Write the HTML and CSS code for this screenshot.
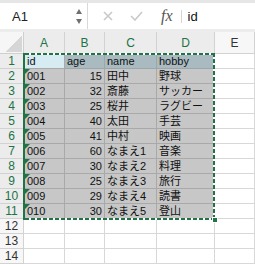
FILE: index.html
```html
<!DOCTYPE html>
<html lang="ja">
<head>
    <meta charset="UTF-8">
    <meta name="viewport" content="width=device-width, initial-scale=1.0">
    <title>Sheet1</title>
    <link rel="stylesheet" href="styles.css">
</head>
<body>
    <!-- 数式バー -->
    <div class="formula-bar">
        <div class="name-box">
            <span class="cell-ref">A1</span>
            <span class="spinner"><i class="up"></i><i class="down"></i></span>
        </div>
        <svg class="icon-cancel" width="10" height="10" viewBox="0 0 10 10">
            <path d="M1 1 L9 9 M9 1 L1 9" stroke="#c9c9c9" stroke-width="1.6" fill="none"/>
        </svg>
        <svg class="icon-enter" width="13" height="10" viewBox="0 0 13 10">
            <path d="M1 5 L5 9 L12 1" stroke="#c9c9c9" stroke-width="1.6" fill="none"/>
        </svg>
        <span class="fx">fx</span>
        <span class="fx-sep"></span>
        <span class="formula">id</span>
    </div>

    <!-- シート -->
    <div class="sheet">
        <div class="c corner"><span class="corner-mark"></span></div>
        <div class="c hd on">A</div>
        <div class="c hd on">B</div>
        <div class="c hd on">C</div>
        <div class="c hd on">D</div>
        <div class="c hd">E</div>

        <div class="c rn on">1</div>
        <div class="c active">id</div>
        <div class="c title">age</div>
        <div class="c title">name</div>
        <div class="c title">hobby</div>
        <div class="c"></div>

        <div class="c rn on">2</div>
        <div class="c sel err">001</div>
        <div class="c sel num">15</div>
        <div class="c sel">田中</div>
        <div class="c sel">野球</div>
        <div class="c"></div>

        <div class="c rn on">3</div>
        <div class="c sel err">002</div>
        <div class="c sel num">32</div>
        <div class="c sel">斎藤</div>
        <div class="c sel">サッカー</div>
        <div class="c"></div>

        <div class="c rn on">4</div>
        <div class="c sel err">003</div>
        <div class="c sel num">25</div>
        <div class="c sel">桜井</div>
        <div class="c sel">ラグビー</div>
        <div class="c"></div>

        <div class="c rn on">5</div>
        <div class="c sel err">004</div>
        <div class="c sel num">40</div>
        <div class="c sel">太田</div>
        <div class="c sel">手芸</div>
        <div class="c"></div>

        <div class="c rn on">6</div>
        <div class="c sel err">005</div>
        <div class="c sel num">41</div>
        <div class="c sel">中村</div>
        <div class="c sel">映画</div>
        <div class="c"></div>

        <div class="c rn on">7</div>
        <div class="c sel err">006</div>
        <div class="c sel num">60</div>
        <div class="c sel">なまえ1</div>
        <div class="c sel">音楽</div>
        <div class="c"></div>

        <div class="c rn on">8</div>
        <div class="c sel err">007</div>
        <div class="c sel num">30</div>
        <div class="c sel">なまえ2</div>
        <div class="c sel">料理</div>
        <div class="c"></div>

        <div class="c rn on">9</div>
        <div class="c sel err">008</div>
        <div class="c sel num">25</div>
        <div class="c sel">なまえ3</div>
        <div class="c sel">旅行</div>
        <div class="c"></div>

        <div class="c rn on">10</div>
        <div class="c sel err">009</div>
        <div class="c sel num">29</div>
        <div class="c sel">なまえ4</div>
        <div class="c sel">読書</div>
        <div class="c"></div>

        <div class="c rn on">11</div>
        <div class="c sel err">010</div>
        <div class="c sel num">30</div>
        <div class="c sel">なまえ5</div>
        <div class="c sel">登山</div>
        <div class="c"></div>

        <div class="c rn">12</div>
        <div class="c"></div><div class="c"></div><div class="c"></div><div class="c"></div><div class="c"></div>

        <div class="c rn">13</div>
        <div class="c"></div><div class="c"></div><div class="c"></div><div class="c"></div><div class="c"></div>

        <div class="c rn">14</div>
        <div class="c"></div><div class="c"></div><div class="c"></div><div class="c"></div><div class="c"></div>

        <!-- コピー範囲の点線 -->
        <div class="marquee"><span class="handle"></span></div>
    </div>
</body>
</html>
```

FILE: styles.css
```css
/* 全体 */
* {
    margin: 0;
    padding: 0;
    box-sizing: border-box;
}

body {
    width: 255px;
    height: 264px;
    overflow: hidden;
    background: #fff;
    color: #111;
    font-family: 'Liberation Sans', 'Noto Sans CJK JP', sans-serif;
}

/* 数式バー */
.formula-bar {
    display: flex;
    align-items: center;
    height: 32px;
    border-top: 3px solid #e6e6e6;
    border-bottom: 3px solid #ececec;
    background: #fff;
}

.name-box {
    display: flex;
    align-items: center;
    justify-content: space-between;
    width: 88px;
    height: 100%;
    padding: 0 5px 0 12px;
    border-right: 1px solid #d9d9d9;
}

.cell-ref {
    font-size: 13px;
    color: #222;
}

.spinner {
    display: flex;
    flex-direction: column;
    gap: 5px;
}

.spinner i {
    display: block;
    width: 0;
    height: 0;
    border-left: 3.5px solid transparent;
    border-right: 3.5px solid transparent;
}

.spinner .up {
    border-bottom: 5px solid #707070;
}

.spinner .down {
    border-top: 5px solid #707070;
}

.icon-cancel {
    margin-left: 15px;
}

.icon-enter {
    margin-left: 17px;
}

.fx {
    margin-left: 18px;
    font-family: 'Liberation Serif', serif;
    font-style: italic;
    font-size: 16px;
    color: #555;
}

.fx-sep {
    width: 1px;
    height: 13px;
    margin-left: 8px;
    background: #d4d4d4;
}

.formula {
    margin-left: 6px;
    font-size: 13px;
    color: #111;
}

/* シート */
.sheet {
    position: relative;
    display: grid;
    grid-template-columns: 24px 41px 40px 52px 58px 1fr;
    grid-template-rows: 22px repeat(14, 15px);
}

.c {
    position: relative;
    border-right: 1px solid #d8d8d8;
    border-bottom: 1px solid #d8d8d8;
    padding: 0 2px;
    font-size: 11px;
    line-height: 14px;
    white-space: nowrap;
    overflow: hidden;
}

/* 見出し */
.corner {
    background: #f6f6f6;
    border-color: #cfcfcf;
}

.corner-mark {
    position: absolute;
    right: 1px;
    bottom: 1px;
    width: 17px;
    height: 17px;
    background: linear-gradient(to bottom right, transparent 50%, #d6d6d6 50%);
}

.hd {
    background: #f7f7f7;
    border-color: #d2d2d2;
    text-align: center;
    font-size: 12px;
    line-height: 22px;
    color: #333;
}

.rn {
    background: #f7f7f7;
    border-color: #d2d2d2;
    padding: 0;
    text-align: center;
    font-size: 12px;
    line-height: 15px;
    color: #333;
}

.hd.on,
.rn.on {
    background: #ececec;
    color: #217346;
}

/* 選択範囲 */
.sel {
    background: #c7c7c7;
    border-color: #a9a9a9;
}

.active {
    background: #d6ecf2;
    border-color: #a9a9a9;
    padding-left: 3px;
}

.title {
    background: #a9bbc0;
    border-color: #98a8ac;
}

.num {
    text-align: right;
}

.err {
    padding-left: 3px;
}

/* 数値が文字列として保存されている印 */
.err::before {
    content: '';
    position: absolute;
    top: 0;
    left: 1px;
    border-top: 5px solid #217346;
    border-right: 5px solid transparent;
}

.marquee {
    position: absolute;
    left: 23px;
    top: 21px;
    width: 192px;
    height: 167px;
    border-left: 2px solid #217346;
    background:
        repeating-linear-gradient(90deg, #217346 0 4px, #fff 4px 6px) top / 100% 2px no-repeat,
        repeating-linear-gradient(90deg, #217346 0 4px, #fff 4px 6px) bottom / 100% 2px no-repeat,
        repeating-linear-gradient(180deg, #217346 0 4px, #fff 4px 6px) right / 2px 100% no-repeat;
}

.handle {
    position: absolute;
    right: -3px;
    bottom: -3px;
    width: 6px;
    height: 6px;
    background: #217346;
    border: 1px solid #fff;
}
```
